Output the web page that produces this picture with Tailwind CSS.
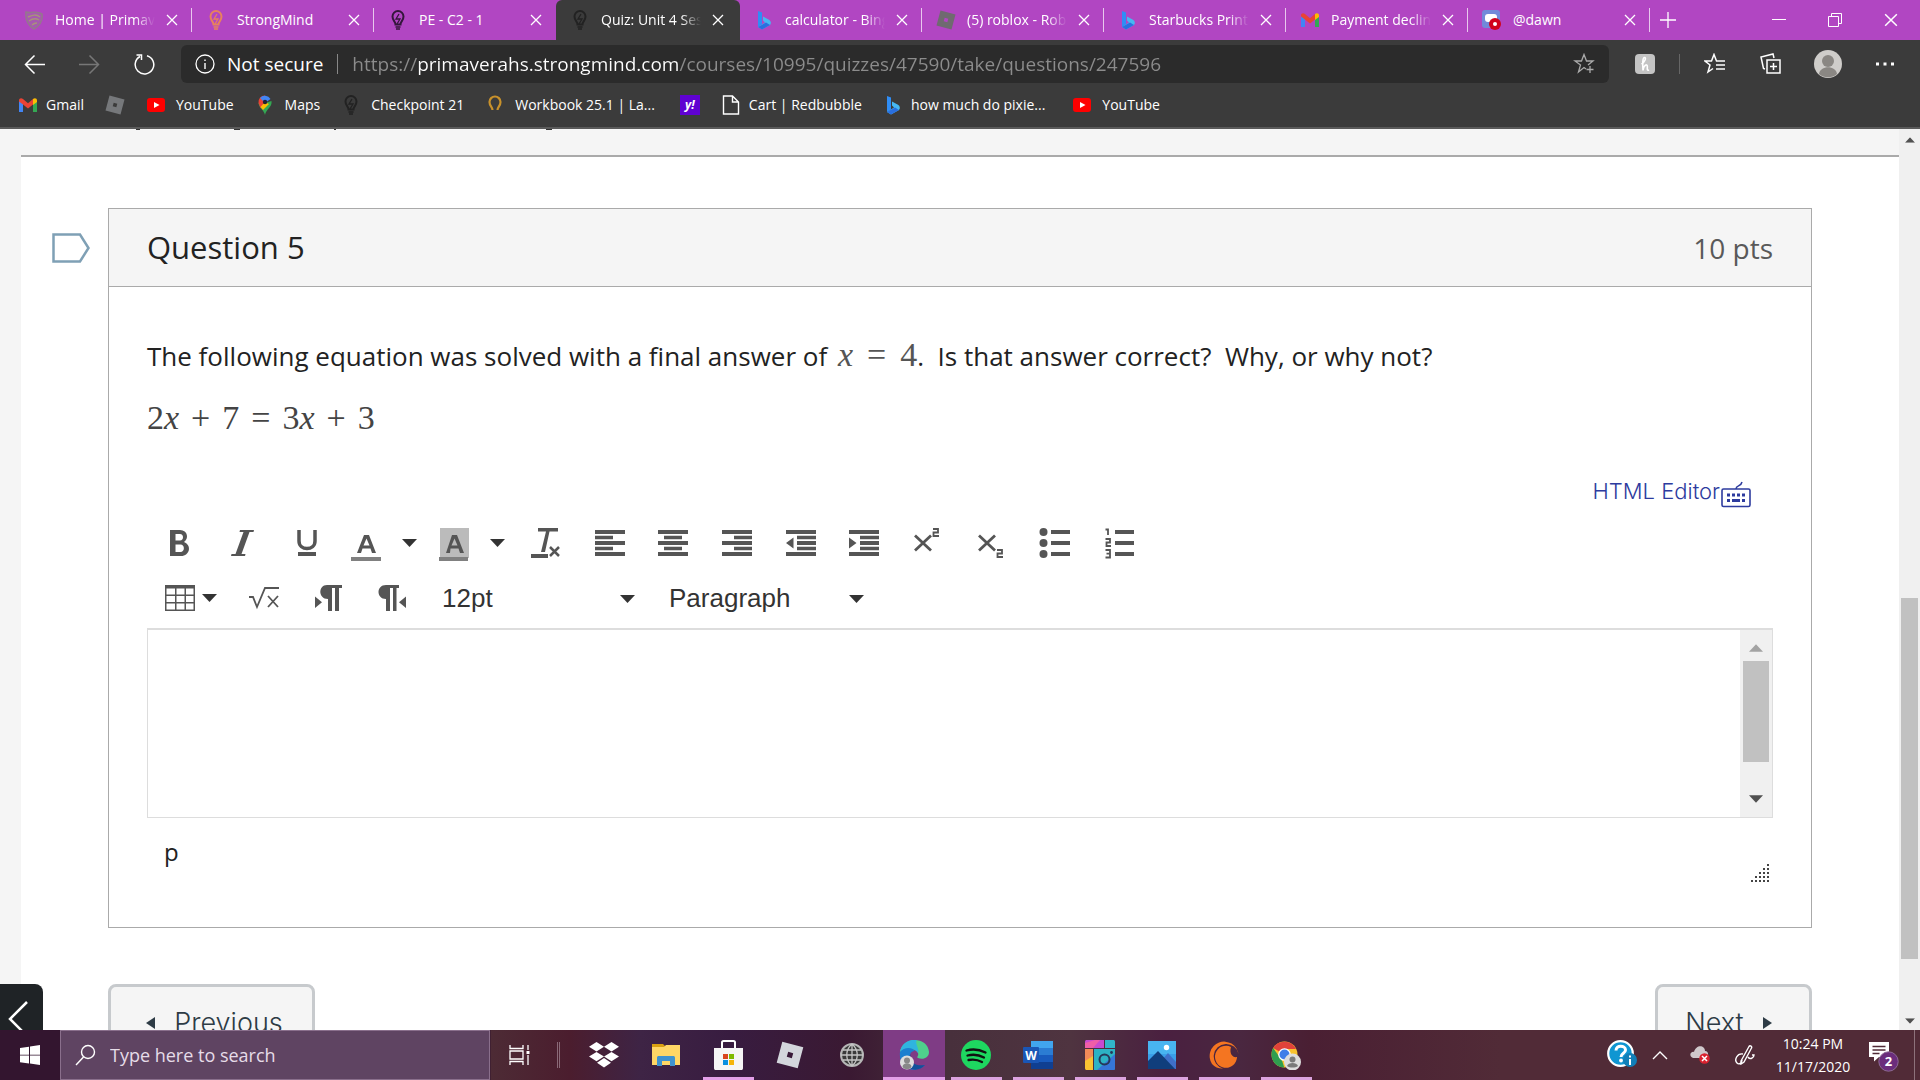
<!DOCTYPE html>
<html lang="en">
  <head>
    <meta charset="UTF-8" />
    <meta name="viewport" content="width=device-width, initial-scale=1.0" />
    <title>Quiz: Unit 4</title>
    <script src="https://cdn.jsdelivr.net/npm/@tailwindcss/browser@4"></script>
    <style>
      body {
        font-family: "Open Sans", "Noto Sans", sans-serif;
      }
    </style>
  </head>
  <body class="flex h-screen flex-col overflow-hidden bg-white text-[#222]">
    <!-- shared icons -->
    <svg class="hidden">
      <symbol id="x" viewBox="0 0 12 12"><path d="M1 1l10 10M11 1L1 11" stroke="currentColor" stroke-width="1.3" fill="none" /></symbol>
      <symbol id="bulb" viewBox="0 0 20 20">
        <path d="M7.5 14.5c0-3-3-4-3-8a5.500 5.500 0 0 1 11 0c0 4-3 5-3 8z" fill="none" stroke="currentColor" stroke-width="2" />
        <path d="M11 4L8 9h4l-3 5" fill="none" stroke="currentColor" stroke-width="1.3" />
        <path d="M7.500 17h5M8 19h4" stroke="currentColor" stroke-width="1.600" />
      </symbol>
      <symbol id="bing" viewBox="0 0 20 20">
        <path d="M4 1l4 1.500v12L4 17z" fill="#2f8df5" />
        <path d="M9 6.500l6 3.200c2 1.300 2.500 3.500 1 5.300L8 19.500 4 17l7-4.500-2-2z" fill="#46b8f2" />
        <path d="M4 17l8-4.500 4 2.500-8 4.500z" fill="#2a6fe0" />
      </symbol>
      <symbol id="roblox" viewBox="0 0 20 20"><path fill-rule="evenodd" d="M4.500 0.500L19.500 4.500 15.500 19.500 0.500 15.500zM8.700 7.700l-1 3.600 3.600 1 1-3.600z" fill="currentColor" /></symbol>
      <symbol id="gmail" viewBox="0 0 20 20">
        <path d="M1 5v12h4V8z" fill="#4285f4" />
        <path d="M15 8v9h4V5z" fill="#34a853" />
        <path d="M1 5.500C1 3 3.500 2.500 5 4l5 4.200L15 4v5.500l-5 4-5-4-4-3z" fill="#ea4335" />
        <path d="M15 4c1.500-1.500 4-1 4 1.500V7l-4 3z" fill="#fbbc04" />
      </symbol>
      <symbol id="youtube" viewBox="0 0 20 20"><rect x="1" y="3" width="18" height="14" rx="3" fill="#f00" /><path d="M8 7l5.500 3L8 13z" fill="#fff" /></symbol>
      <symbol id="caret" viewBox="0 0 15 8"><path d="M0 0h15L7.500 8z" fill="currentColor" /></symbol>
    </svg>

    <!-- tab strip -->
    <header class="flex h-10 shrink-0 items-center bg-[#b146c2] pl-2.5 text-sm text-white">
      <nav class="flex h-full items-center" aria-label="Tabs">
        <div class="flex h-full w-[182px] items-center pl-3.5">
          <svg class="mr-[11px] size-5 shrink-0" viewBox="0 0 20 20"><path d="M2 2c5 2 11-2 16 2 1 7-3 12-8 15C5 16 1 11 2 2z" fill="#a65ab0" stroke="#94788c" stroke-width="1.500" /><path d="M4 7c5-2 8-3 12 0M5 11c4-3 7-3 10-1M8 15c2-2 3-2 5-2" stroke="#a8937a" stroke-width="1.500" fill="none" /></svg>
          <span class="w-[100px] overflow-hidden whitespace-nowrap [mask-image:linear-gradient(to_right,#000_80%,transparent)]">Home | Primavera</span>
          <button class="ml-[11px]" aria-label="Close tab"><svg class="size-3"><use href="#x" /></svg></button>
          <span class="ml-auto h-6 w-px bg-white/70"></span>
        </div>
        <div class="flex h-full w-[182px] items-center pl-3.5">
          <svg class="mr-[11px] size-5 shrink-0 text-[#e8825c]"><use href="#bulb" /></svg>
          <span class="w-[100px] overflow-hidden whitespace-nowrap">StrongMind</span>
          <button class="ml-[11px]" aria-label="Close tab"><svg class="size-3"><use href="#x" /></svg></button>
          <span class="ml-auto h-6 w-px bg-white/70"></span>
        </div>
        <div class="flex h-full w-[182px] items-center pl-3.5">
          <svg class="mr-[11px] size-5 shrink-0 text-[#33163a]"><use href="#bulb" /></svg>
          <span class="w-[100px] overflow-hidden whitespace-nowrap">PE - C2 - 1</span>
          <button class="ml-[11px]" aria-label="Close tab"><svg class="size-3"><use href="#x" /></svg></button>
        </div>
        <div class="flex h-full w-[184px] items-center rounded-t-md bg-[#3b3b3b] pl-3.5">
          <svg class="mr-[11px] size-5 shrink-0 text-[#222]"><use href="#bulb" /></svg>
          <span class="w-[100px] overflow-hidden whitespace-nowrap [mask-image:linear-gradient(to_right,#000_80%,transparent)]">Quiz: Unit 4 Session</span>
          <button class="ml-[11px]" aria-label="Close tab"><svg class="size-3"><use href="#x" /></svg></button>
        </div>
        <div class="flex h-full w-[182px] items-center pl-3.5">
          <svg class="mr-[11px] size-5 shrink-0"><use href="#bing" /></svg>
          <span class="w-[100px] overflow-hidden whitespace-nowrap [mask-image:linear-gradient(to_right,#000_80%,transparent)]">calculator - Bing</span>
          <button class="ml-[11px]" aria-label="Close tab"><svg class="size-3"><use href="#x" /></svg></button>
          <span class="ml-auto h-6 w-px bg-white/70"></span>
        </div>
        <div class="flex h-full w-[182px] items-center pl-3.5">
          <svg class="mr-[11px] size-5 shrink-0 text-[#6f6a70]"><use href="#roblox" /></svg>
          <span class="w-[100px] overflow-hidden whitespace-nowrap [mask-image:linear-gradient(to_right,#000_80%,transparent)]">(5) roblox - Roblox</span>
          <button class="ml-[11px]" aria-label="Close tab"><svg class="size-3"><use href="#x" /></svg></button>
          <span class="ml-auto h-6 w-px bg-white/70"></span>
        </div>
        <div class="flex h-full w-[182px] items-center pl-3.5">
          <svg class="mr-[11px] size-5 shrink-0"><use href="#bing" /></svg>
          <span class="w-[100px] overflow-hidden whitespace-nowrap [mask-image:linear-gradient(to_right,#000_80%,transparent)]">Starbucks Printable</span>
          <button class="ml-[11px]" aria-label="Close tab"><svg class="size-3"><use href="#x" /></svg></button>
          <span class="ml-auto h-6 w-px bg-white/70"></span>
        </div>
        <div class="flex h-full w-[182px] items-center pl-3.5">
          <svg class="mr-[11px] size-5 shrink-0"><use href="#gmail" /></svg>
          <span class="w-[100px] overflow-hidden whitespace-nowrap [mask-image:linear-gradient(to_right,#000_80%,transparent)]">Payment declined</span>
          <button class="ml-[11px]" aria-label="Close tab"><svg class="size-3"><use href="#x" /></svg></button>
          <span class="ml-auto h-6 w-px bg-white/70"></span>
        </div>
        <div class="flex h-full w-[182px] items-center pl-3.5">
          <svg class="mr-[11px] size-5 shrink-0" viewBox="0 0 20 20"><rect width="18" height="18" rx="3" fill="#7289da" /><rect x="3" y="4" width="12" height="8" rx="3" fill="#fff" /><circle cx="13" cy="14" r="6" fill="#d0021b" /><circle cx="13" cy="14" r="2" fill="#fff" /></svg>
          <span class="w-[100px] overflow-hidden whitespace-nowrap">@dawn</span>
          <button class="ml-[11px]" aria-label="Close tab"><svg class="size-3"><use href="#x" /></svg></button>
          <span class="ml-auto h-6 w-px bg-white/70"></span>
        </div>
      </nav>
      <button class="ml-2.5" aria-label="New tab"><svg class="size-4" viewBox="0 0 16 16"><path d="M8 0v16M0 8h16" stroke="#fff" stroke-width="1.300" /></svg></button>
      <div class="ml-auto flex items-center gap-[42px] pr-[22px]">
        <button aria-label="Minimize"><svg class="size-3.5" viewBox="0 0 14 14"><path d="M0 6.500h14" stroke="#fff" /></svg></button>
        <button aria-label="Restore"><svg class="size-3.5" viewBox="0 0 14 14"><path d="M.5 3.500h10v10H.5zM3.500 3.500v-3h10v10h-3" stroke="#fff" fill="none" /></svg></button>
        <button aria-label="Close"><svg class="size-3.5"><use href="#x" /></svg></button>
      </div>
    </header>

    <!-- address row -->
    <div class="flex h-[43px] shrink-0 items-end bg-[#3b3b3b] pl-6 text-white">
      <div class="flex h-[38px] items-center gap-[34px] pr-[26px]">
        <button aria-label="Back"><svg class="size-[21px]" viewBox="0 0 21 21"><path d="M21 10.500H1.500M10.500 1.500l-9 9 9 9" stroke="#fff" stroke-width="1.500" fill="none" /></svg></button>
        <button aria-label="Forward"><svg class="size-[21px]" viewBox="0 0 21 21"><path d="M0 10.500h19.500M10.500 1.500l9 9-9 9" stroke="#777" stroke-width="1.500" fill="none" /></svg></button>
        <button aria-label="Reload"><svg class="size-[21px]" viewBox="0 0 21 21"><path d="M13 1.700A9.300 9.300 0 1 1 6 2.500M2.500 1h5v5" stroke="#fff" stroke-width="1.500" fill="none" /></svg></button>
      </div>
      <div class="flex h-[38px] grow items-center rounded-md bg-[#2b2b2b] px-3.5 text-[19px]">
        <svg class="mr-3 size-5 shrink-0" viewBox="0 0 20 20"><circle cx="10" cy="10" r="9" fill="none" stroke="#fff" stroke-width="1.300" /><path d="M10 9v6M10 5.500v1.500" stroke="#fff" stroke-width="1.400" /></svg>
        <label for="url" class="whitespace-nowrap">Not secure</label>
        <span class="mx-3.5 h-5 w-px bg-[#888]"></span>
        <input id="url" type="text" value="https://primaverahs.strongmind.com/courses/10995/quizzes/47590/take/questions/247596"
          class="min-w-0 grow bg-[linear-gradient(to_right,#8c8c8c_66px,#fff_66px,#fff_326px,#8c8c8c_326px)] bg-clip-text text-transparent outline-none" />
        <button aria-label="Add to favorites"><svg class="size-[22px]" viewBox="0 0 22 22"><path d="M13 16l-2-1.500L5.500 19l2-7L2 8h6.500L11 1.500 13.500 8H20l-5 4M17 13v7M13.500 16.500h7" stroke="#aaa" stroke-width="1.300" fill="none" /></svg></button>
      </div>
      <div class="flex h-[38px] items-center pr-[26px] pl-[26px]">
        <button aria-label="Honey" class="mr-6 flex size-5 items-center justify-center rounded bg-[#c4c4c4]"><svg class="size-4" viewBox="0 0 16 16"><path d="M4.500 8C8 6 9.500 1.500 7.500 1.500S5.500 8 6 14.500c.5-5 4-7 4.300-4.500.2 2-.8 5 1.700 4" stroke="#fff" stroke-width="1.600" fill="none" /></svg></button>
        <span class="mr-6 h-5 w-px bg-[#666]"></span>
        <button aria-label="Favorites" class="mr-[34px]"><svg class="size-[22px]" viewBox="0 0 22 22"><path d="M9 15.500L4 19l2-7L1 8h6.500L10 1.500 12.500 8H21M12 12h9M12 16h9" stroke="#fff" stroke-width="1.500" fill="none" /></svg></button>
        <button aria-label="Collections" class="mr-8"><svg class="size-[22px]" viewBox="0 0 22 22"><path d="M7 7h13v13H7zM13.500 10v7M10 13.500h7M5 16l-1.500-.5L1 4l12-3 1 4" stroke="#fff" stroke-width="1.500" fill="none" /></svg></button>
        <button aria-label="Profile" class="mr-[34px]"><svg class="size-7" viewBox="0 0 28 28"><circle cx="14" cy="14" r="14" fill="#cfcdca" /><circle cx="14" cy="11" r="6" fill="#8a8783" /><path d="M5 24c1-9 17-9 18 0a14 14 0 0 1-18 0z" fill="#8a8783" /></svg></button>
        <button aria-label="Menu"><svg class="h-1 w-[18px]" viewBox="0 0 18 4"><path d="M0 .5h3v3H0zM7.500.5h3v3h-3zM15 .5h3v3h-3z" fill="#fff" /></svg></button>
      </div>
    </div>

    <!-- bookmarks -->
    <nav class="flex h-[46px] shrink-0 items-center gap-[21px] border-b-2 border-[#5a5a5a] bg-[#3b3b3b] pl-[18px] text-sm text-white" aria-label="Bookmarks">
      <a href="#" class="flex items-center gap-2"><svg class="size-5"><use href="#gmail" /></svg>Gmail</a>
      <a href="#" aria-label="Roblox"><svg class="size-5 text-[#76787b]"><use href="#roblox" /></svg></a>
      <a href="#" class="flex items-center gap-2.5"><svg class="size-5"><use href="#youtube" /></svg>YouTube</a>
      <a href="#" class="flex items-center gap-2.5"><svg class="size-5" viewBox="0 0 20 20"><path d="M10 20c-1-5-6-7-6.500-12L10 8l6.500-2c1 6-5.500 8-6.500 14z" fill="#34a853" /><path d="M3.500 8A6.500 6.500 0 0 1 10 .5L10 8l-4.500 5z" fill="#ea4335" /><path d="M5 3A6.500 6.500 0 0 1 15.500 4L10 8z" fill="#4285f4" /><path d="M5.500 12L10 7l4 2-6 6z" fill="#fbbc04" /><circle cx="10" cy="7" r="2.200" fill="#223" /></svg>Maps</a>
      <a href="#" class="flex items-center gap-2.5"><svg class="size-5 text-[#222]"><use href="#bulb" /></svg>Checkpoint 21</a>
      <a href="#" class="flex items-center gap-2.5"><svg class="size-5" viewBox="0 0 20 20"><path d="M7.500 15c0-3-3-4-3-8a5.500 5.500 0 0 1 11 0c0 4-3 5-3 8" fill="none" stroke="#c8912b" stroke-width="2.200" /></svg>Workbook 25.1 | La...</a>
      <a href="#" aria-label="Yahoo" class="ml-1 flex size-5 items-center justify-center bg-[#5f01d1] text-xs font-bold italic">y!</a>
      <a href="#" class="flex items-center gap-2"><svg class="size-5" viewBox="0 0 20 20"><path d="M2.500 1h9l6 6v12h-15zM11.500 1v6h6" fill="none" stroke="#fff" stroke-width="1.400" /></svg>Cart | Redbubble</a>
      <a href="#" class="flex items-center gap-2"><svg class="size-5"><use href="#bing" /></svg>how much do pixie...</a>
      <a href="#" class="ml-1.5 flex items-center gap-2.5"><svg class="size-5"><use href="#youtube" /></svg>YouTube</a>
    </nav>

    <!-- page -->
    <div class="relative flex min-h-0 grow bg-[#f5f5f5] pl-[21px]">
      <main class="min-w-0 grow overflow-hidden">
        <div class="flex h-[26px] gap-[94px] pl-[115px]">
          <span class="h-px w-1 bg-[#333]"></span>
          <span class="h-px w-1.5 bg-[#333]"></span>
          <span class="h-px w-0.5 bg-[#333]"></span>
          <span class="ml-[116px] h-px w-1.5 bg-[#333]"></span>
        </div>
        <div class="flex border-t-2 border-[#aaa] bg-white pt-[51px] pr-[87px] pb-14">
          <button class="mt-[25px] mr-[18px] ml-[31px] self-start" aria-label="Flag question"><svg class="h-[30px] w-[38px]" viewBox="0 0 38 30"><path d="M1.500 1.500H28l8.500 13.500-8.500 13.500H1.500z" fill="#fff" stroke="#7fa0b5" stroke-width="2.500" /></svg></button>
          <div class="min-w-0 grow">
            <section class="border border-[#aaa]">
              <div class="flex h-[78px] items-center justify-between border-b border-[#aaa] bg-[#f5f5f5] px-[38px]">
                <h2 class="text-[31px]">Question 5</h2>
                <span class="text-[28px] text-[#595959]">10 pts</span>
              </div>
              <div class="px-[38px] pt-12">
                <p class="flex items-baseline text-[26px] leading-10 whitespace-pre">The following equation was solved with a final answer of <span class="ml-1 flex items-baseline gap-3.5 font-['Liberation_Serif',serif] text-[34px] leading-10 text-[#555]"><i>x</i><span>=</span>4</span>.&nbsp; Is that answer correct?&nbsp; Why, or why not?</p>
                <p class="mt-[22px] flex items-baseline gap-3 font-['Liberation_Serif',serif] text-[34px] leading-10 text-[#444]"><span>2<i>x</i></span><span>+</span><span>7</span><span>=</span><span>3<i>x</i></span><span>+</span><span>3</span></p>
                <div class="mt-[30px] flex h-[47px] items-center justify-end gap-px pr-[22px] text-[#2d3b9e]">
                  <a href="#" class="font-[Inter,sans-serif] text-[22px] font-light">HTML Editor</a>
                  <button aria-label="Keyboard shortcuts"><svg class="mt-1.5 h-[27px] w-[30px]" viewBox="0 0 30 27"><rect x="1" y="8" width="28" height="17.500" rx="1.500" fill="none" stroke="currentColor" stroke-width="1.600" /><path d="M15 8c0-4 5-2 6-7" fill="none" stroke="currentColor" stroke-width="1.500" /><path d="M6 12.500h3v3H6zm5 0h3v3h-3zm5 0h3v3h-3zm5 0h3v3h-3zM6 18h3v3H6zm5 0h8v3h-8zm10 0h3v3h-3z" fill="currentColor" /></svg></button>
                </div>

                <!-- editor toolbar -->
                <div class="text-[#555]">
                  <div class="flex h-[55px] items-center">
                    <div class="grid w-[191px] grid-cols-3 justify-items-center">
                      <button aria-label="Bold"><svg class="size-8" viewBox="0 0 32 32"><path fill-rule="evenodd" d="M7 3h10c8 0 9 9 4 12 8 3 6 14-3 14H7zM12.500 7v6.500H17c4 0 4-6.500 0-6.500zm0 10.500V25H17.500c4.500 0 4.500-7.500 0-7.500z" fill="currentColor" /></svg></button>
                      <button aria-label="Italic"><svg class="size-8" viewBox="0 0 32 32"><path d="M14 3h14l-.5 2h-4l-8 22h4l-.5 2H5l.5-2h4l8-22h-4z" fill="currentColor" /></svg></button>
                      <button aria-label="Underline"><svg class="size-8" viewBox="0 0 32 32"><path d="M9 3v11c0 10 16 10 16 0V3" fill="none" stroke="currentColor" stroke-width="3.500" /><path d="M8 25h18v4H8z" fill="currentColor" /></svg></button>
                    </div>
                    <div class="flex w-[88px] items-center pl-[13px]">
                      <button aria-label="Text color"><svg class="mt-1 h-[34px] w-[30px]" viewBox="0 0 30 34"><path fill-rule="evenodd" d="M13 7h5l7 18h-4l-1.500-4.500h-8L10 25H6zm2.500 3.500L12.500 17.500h6z" fill="currentColor" /><path d="M0 29h30v4H0z" fill="#808080" /></svg></button>
                      <button aria-label="Text color options" class="ml-[21px] text-[#333]"><svg class="h-2 w-[15px]"><use href="#caret" /></svg></button>
                    </div>
                    <div class="flex w-[88px] items-center pl-[13px]">
                      <button aria-label="Background color"><svg class="mt-1 h-[34px] w-[30px]" viewBox="0 0 30 34"><path d="M1 0h29v30H1z" fill="#bbb" /><path fill-rule="evenodd" d="M13 7h5l7 18h-4l-1.500-4.500h-8L11 25H7zm2.500 3.500L12.500 17.500h6z" fill="currentColor" /><path d="M0 29h29v4H0z" fill="#808080" /></svg></button>
                      <button aria-label="Background color options" class="ml-[21px] text-[#333]"><svg class="h-2 w-[15px]"><use href="#caret" /></svg></button>
                    </div>
                    <div class="grid w-[637px] grid-cols-10 justify-items-center">
                      <button aria-label="Clear formatting"><svg class="size-8" viewBox="0 0 32 32"><path d="M8 1h20v3.500H19.500L15 25h-4l5-20.500H8zM1 27h17v4H1z" fill="currentColor" /><path d="M20 20l9 9M29 20l-9 9" stroke="currentColor" stroke-width="2.500" /></svg></button>
                      <button aria-label="Align left"><svg class="size-8" viewBox="0 0 32 32"><path d="M1 3h30v4H1zm0 5.700h18v3.500H1zM1 14h30v4H1zm0 5.700h18v3.500H1zM1 25h30v4H1z" fill="currentColor" /></svg></button>
                      <button aria-label="Align center"><svg class="size-8" viewBox="0 0 32 32"><path d="M1 3h30v4H1zm6 5.700h18v3.500H7zM1 14h30v4H1zm6 5.700h18v3.500H7zM1 25h30v4H1z" fill="currentColor" /></svg></button>
                      <button aria-label="Align right"><svg class="size-8" viewBox="0 0 32 32"><path d="M1 3h30v4H1zm12 5.700h18v3.500H13zM1 14h30v4H1zm12 5.700h18v3.500H13zM1 25h30v4H1z" fill="currentColor" /></svg></button>
                      <button aria-label="Decrease indent"><svg class="size-8" viewBox="0 0 32 32"><path d="M1 3h30v4H1zm11 5.700h19v3.500H12zM12 14h19v4H12zm0 5.700h19v3.500H12zM1 25h30v4H1zM8.500 10.500v11L1 16z" fill="currentColor" /></svg></button>
                      <button aria-label="Increase indent"><svg class="size-8" viewBox="0 0 32 32"><path d="M1 3h30v4H1zm11 5.700h19v3.500H12zM12 14h19v4H12zm0 5.700h19v3.500H12zM1 25h30v4H1zM1 10.500v11L8.500 16z" fill="currentColor" /></svg></button>
                      <button aria-label="Superscript"><svg class="size-8" viewBox="0 0 32 32"><path d="M3 8.500l16 15M19 8.500L3 23.500" stroke="currentColor" stroke-width="2.800" /><path d="M21 2h5v3.500h-4.500V9H27" fill="none" stroke="currentColor" stroke-width="1.800" /></svg></button>
                      <button aria-label="Subscript"><svg class="size-8" viewBox="0 0 32 32"><path d="M3 8.500l16 15M19 8.500L3 23.500" stroke="currentColor" stroke-width="2.800" /><path d="M21 23h5v3.500h-4.500V30H27" fill="none" stroke="currentColor" stroke-width="1.800" /></svg></button>
                      <button aria-label="Bulleted list"><svg class="size-8" viewBox="0 0 32 32"><path d="M12 3h19v4H12zm0 11h19v4H12zm0 11h19v4H12z" fill="currentColor" /><circle cx="4.500" cy="5" r="4" fill="currentColor" /><circle cx="4.500" cy="16" r="4" fill="currentColor" /><circle cx="4.500" cy="27" r="4" fill="currentColor" /></svg></button>
                      <button aria-label="Numbered list"><svg class="size-8" viewBox="0 0 32 32"><path d="M12 3h19v4H12zm0 11h19v4H12zm0 11h19v4H12z" fill="currentColor" /><path d="M2.500 2.500H5V8M2.500 12H7v3.500H3.500V19H8M2.500 23H7v7.500H2.500M3.500 26.700H7" fill="none" stroke="currentColor" stroke-width="1.800" /></svg></button>
                    </div>
                  </div>
                  <div class="flex h-[58px] items-start pt-[9px] text-[#333]">
                    <button class="flex w-[85px] items-center gap-[7px] pt-1.5 pl-[18px]" aria-label="Table"><svg class="h-[26px] w-[30px] text-[#555]" viewBox="0 0 30 26"><path fill-rule="evenodd" d="M0 0h30v26H0zM1.500 3.500v6H10v-6zm10 0v6h8v-6zm9.500 0v6h7.500v-6zM1.500 11v6H10v-6zm10 0v6h8v-6zm9.500 0v6h7.500v-6zM1.500 18.500v6H10v-6zm10 0v6h8v-6zm9.500 0v6h7.500v-6z" fill="currentColor" /></svg><svg class="h-2 w-[15px]"><use href="#caret" /></svg></button>
                    <div class="grid w-48 grid-cols-3 justify-items-center pt-1.5 text-[#555]">
                      <button aria-label="Insert equation"><svg class="h-[26px] w-8" viewBox="0 0 32 26"><path d="M1 12h4l4 10 8-19h14" fill="none" stroke="currentColor" stroke-width="1.800" /><path d="M20 11l10 11M30 11L20 22" stroke="currentColor" stroke-width="1.800" /></svg></button>
                      <button aria-label="Left to right"><svg class="h-[26px] w-7" viewBox="0 0 28 26"><path d="M13 0h15v3h-3v23h-4V3h-3v23h-4V14C4 14 4 0 13 0zM1 11.500V23l7-5.700z" fill="currentColor" /></svg></button>
                      <button aria-label="Right to left"><svg class="h-[26px] w-7" viewBox="0 0 28 26"><path d="M8 0h13v3h-2.500v23H15V3h-3v23H8V14C-2 14-2 0 8 0zM28 11.500V23l-7-5.700z" fill="currentColor" /></svg></button>
                    </div>
                    <label class="relative w-[227px]">
                      <select aria-label="Font size" class="h-9 w-full appearance-none pl-[18px] font-['Liberation_Sans',sans-serif] text-[26px]"><option>12pt</option></select>
                      <svg class="pointer-events-none absolute top-4 right-4 h-2 w-[15px]"><use href="#caret" /></svg>
                    </label>
                    <label class="relative w-[229px]">
                      <select aria-label="Block format" class="h-9 w-full appearance-none pl-[18px] font-['Liberation_Sans',sans-serif] text-[26px]"><option>Paragraph</option></select>
                      <svg class="pointer-events-none absolute top-4 right-4 h-2 w-[15px]"><use href="#caret" /></svg>
                    </label>
                  </div>
                </div>

                <div class="flex h-[190px] border border-[#ddd] border-t-2">
                  <textarea aria-label="Answer" class="grow resize-none p-3 text-[26px] outline-none"></textarea>
                  <div class="flex w-8 flex-col items-center bg-[#f0f0f0] py-3.5 pr-px">
                    <svg class="h-2 w-3.5 rotate-180 text-[#a3a3a3]"><use href="#caret" /></svg>
                    <span class="mt-[9px] h-[101px] w-[26px] bg-[#c1c1c1]"></span>
                    <svg class="mt-auto h-2 w-3.5 text-[#505050]"><use href="#caret" /></svg>
                  </div>
                </div>
                <div class="flex h-[109px] items-start justify-between pt-4 pr-1 pl-[17px]">
                  <span class="text-2xl leading-9">p</span>
                  <svg class="mt-[30px] size-[18px]" viewBox="0 0 18 18"><path d="M16 0h2v2h-2zM12 4h2v2h-2zm4 0h2v2h-2zM8 8h2v2H8zm4 0h2v2h-2zm4 0h2v2h-2zM4 12h2v2H4zm4 0h2v2H8zm4 0h2v2h-2zm4 0h2v2h-2zM0 16h2v2H0zm4 0h2v2H4zm4 0h2v2H8zm4 0h2v2h-2zm4 0h2v2h-2z" fill="#444" /></svg>
                </div>
              </div>
            </section>

            <div class="mt-14 flex justify-between font-[Inter,sans-serif] text-[27px] font-light text-[#2d3b45]">
              <button class="flex h-[78px] w-[207px] items-center justify-center gap-[18px] rounded-lg border-3 border-[#c7cacd] bg-[#f5f5f5] pl-1"><svg class="size-3" viewBox="0 0 12 12"><path d="M11 0v12L2 6z" fill="currentColor" /></svg>Previous</button>
              <button class="flex h-[78px] w-[157px] items-center justify-center gap-[18px] rounded-lg border-3 border-[#c7cacd] bg-[#f5f5f5] pr-2">Next<svg class="size-3" viewBox="0 0 12 12"><path d="M1 0v12l9-6z" fill="currentColor" /></svg></button>
            </div>
          </div>
        </div>
      </main>
      <!-- window scrollbar -->
      <div class="flex w-[21px] shrink-0 flex-col items-center bg-[#f0f0f0] pt-2 pb-1.5">
        <svg class="h-1.5 w-2.5 rotate-180 text-[#505050]" viewBox="0 0 15 8"><use href="#caret" /></svg>
        <span class="grow-[454]"></span>
        <span class="w-[17px] grow-[361] bg-[#c1c1c1]"></span>
        <span class="grow-[59]"></span>
        <svg class="h-1.5 w-2.5 text-[#505050]" viewBox="0 0 15 8"><use href="#caret" /></svg>
      </div>
      <button class="absolute bottom-0 left-0 h-[46px] w-[43px] overflow-hidden rounded-tr-lg bg-[#1f2326]" aria-label="Expand menu"><svg class="h-[46px] w-[43px]" viewBox="0 0 43 46"><path d="M27 18L10 35l17 17" fill="none" stroke="#fff" stroke-width="2.500" /></svg></button>
    </div>

    <!-- taskbar -->
    <footer class="flex h-[50px] shrink-0 bg-[linear-gradient(to_right,#33152f_0,#33152f_490px,#4d2b35_491px,#4b1d2e_570px,#3e2445_640px,#381c40_730px,#3a1932_850px,#48303c_950px,#4f3440_1070px,#4a2040_1165px,#4a2740_1240px,#4a1f33_1310px,#512b37_1500px)] text-white">
      <button class="flex w-[60px] items-center justify-center" aria-label="Start"><svg class="size-5" viewBox="0 0 20 20"><path d="M0 3l9-1.300v8H0zm10-1.500L20 0v9.700H10zM0 10.500h9v8L0 17.200zm10 0h10V20l-10-1.400z" fill="#fff" /></svg></button>
      <div class="flex w-[430px] items-center border border-[#8a6f8c] bg-[#5f4462] pl-3.5">
        <svg class="mr-3.5 h-[22px] w-[21px]" viewBox="0 0 21 22"><circle cx="13" cy="8" r="6.500" fill="none" stroke="#fff" stroke-width="1.400" /><path d="M8.500 13L1 21" stroke="#fff" stroke-width="1.400" /></svg>
        <input type="text" aria-label="Search" placeholder="Type here to search" class="grow bg-transparent text-lg outline-none placeholder:text-[#e6dce8]" />
      </div>
      <button class="flex w-[60px] items-center justify-center" aria-label="Task view"><svg class="h-5 w-[22px]" viewBox="0 0 22 20"><path d="M1 0v3.500h13V0M1 20v-3.500h13V20M1 6h13v8H1zM19 0v5M19 10v10" fill="none" stroke="#fff" stroke-width="1.300" /><path d="M17.500 6h3v3h-3z" fill="#fff" /></svg></button>
      <span class="mt-3 mr-[13px] ml-[7px] h-[26px] w-[3px] border-x border-[#8a6a78]"></span>
      <div class="flex">
        <button class="flex w-[62px] items-center justify-center" aria-label="Dropbox"><svg class="h-[26px] w-[30px]" viewBox="0 0 30 26"><path d="M7.500 0L15 4.700 7.500 9.500 0 4.700zm15 0L30 4.700l-7.500 4.800L15 4.700zM7.500 10l7.500 4.500-7.500 4.800L0 14.500zm15 0l7.500 4.500-7.500 4.800-7.500-4.800zM15 16l7 4.700-7 4.800-7-4.800z" fill="#fff" /></svg></button>
        <button class="flex w-[62px] items-center justify-center" aria-label="File Explorer"><svg class="h-6 w-7" viewBox="0 0 28 24"><path d="M0 1h11l3 3H0z" fill="#d9a011" /><path d="M0 4h12l2-2h14v20H0z" fill="#ffd766" /><path d="M5 23v-8c0-1.500.5-2 2-2h14c1.500 0 2 .5 2 2v8h-5v-5h-8v5z" fill="#3f93cf" /></svg></button>
        <button class="relative flex w-[62px] items-center justify-center" aria-label="Store"><svg class="h-[30px] w-[29px]" viewBox="0 0 29 30"><path d="M8 8V2.500C8 1.500 8.500 1 9.500 1h10c1 0 1.500.5 1.500 1.500V8" fill="none" stroke="#fff" stroke-width="2" /><path d="M0 8h29v20c0 1.500-.5 2-2 2H2c-1.500 0-2-.5-2-2z" fill="#f5f5f5" /><path d="M9 14h5v5H9z" fill="#d9451e" /><path d="M15 14h5v5h-5z" fill="#7fba00" /><path d="M9 20h5v5H9z" fill="#0a8fe0" /><path d="M15 20h5v5h-5z" fill="#f5b50a" /></svg><span class="absolute bottom-0 h-[3px] w-[51px] bg-[#e39fe8]"></span></button>
        <button class="flex w-[62px] items-center justify-center" aria-label="Roblox"><svg class="size-7 text-[#d3d6dc]"><use href="#roblox" /></svg></button>
        <button class="flex w-[62px] items-center justify-center" aria-label="Browser"><svg class="size-6" viewBox="0 0 24 24"><circle cx="12" cy="12" r="11" fill="#3a3a3a" stroke="#b5b5b5" stroke-width="2" /><path d="M12 1v22M1 12h22M3 7h18M3 17h18M12 1c-7 6-7 16 0 22M12 1c7 6 7 16 0 22" fill="none" stroke="#c4c4c4" stroke-width="1.300" /></svg></button>
        <button class="relative flex w-[62px] items-center justify-center bg-[#7f3c85]" aria-label="Edge"><svg class="size-[30px]" viewBox="0 0 30 30"><path d="M1 12C3-4 29-4 30 12c0 6-6 8-11 6-2-1 1-2 0-5C17 8 6 7 1 12z" fill="#4fd08c" /><path d="M1 12C3 2 11-1 18 0c-3 3 3 9 1 13C17 8 6 7 1 12z" fill="#2fb4e0" /><path d="M1 12c4-5 12-5 15-1-7 0-6 9-2 13 3 3 8 3 12 1-9 9-27 5-25-13z" fill="#1b7fd0" /><path d="M12 14c-3 6 3 13 14 11-5 6-14 6-17 1-2-5 0-9 3-12z" fill="#11519c" /><circle cx="8" cy="22.500" r="7" fill="#ddd" /><circle cx="8" cy="20.500" r="3" fill="#888" /><path d="M3.500 27c0-5 9-5 9 0-2 3-7 3-9 0z" fill="#888" /></svg><span class="absolute bottom-0 h-[3px] w-[62px] bg-[#e39fe8]"></span></button>
        <button class="relative flex w-[62px] items-center justify-center" aria-label="Spotify"><svg class="size-[30px]" viewBox="0 0 30 30"><circle cx="15" cy="15" r="15" fill="#1ed760" /><path d="M5.500 10.500c7-2 13-1 19 2M6.500 15.500c6-1.500 11-1 16.500 2M7.500 20c5-1 9-.5 13.500 2" fill="none" stroke="#111" stroke-width="2.300" stroke-linecap="round" /></svg><span class="absolute bottom-0 h-[3px] w-[51px] bg-[#dca3df]"></span></button>
        <button class="relative flex w-[62px] items-center justify-center" aria-label="Word"><svg class="h-7 w-[30px]" viewBox="0 0 30 28"><path d="M8 0h22v7H8z" fill="#41a5ee" /><path d="M8 7h22v7H8z" fill="#2b7cd3" /><path d="M8 14h22v7H8z" fill="#185abd" /><path d="M8 21h22v7H8z" fill="#103f91" /><rect y="6" width="16" height="16" rx="1" fill="#1a56b5" /><text x="8" y="18.500" text-anchor="middle" font-size="12" font-weight="700" fill="#fff">W</text></svg><span class="absolute bottom-0 h-[3px] w-[51px] bg-[#dca3df]"></span></button>
        <button class="relative flex w-[62px] items-center justify-center" aria-label="Photo collage"><svg class="size-[30px]" viewBox="0 0 30 30"><path d="M0 8V2c0-1.500.5-2 2-2h17v8z" fill="#c74bd0" /><path d="M0 3L10 0h5L8 8H0z" fill="#f05ea8" /><path d="M20 0h8c1.500 0 2 .5 2 2v6H20z" fill="#31b6c9" /><path d="M0 9h8v21H2c-1.500 0-2-.5-2-2z" fill="#f9c332" /><path d="M0 9h8v7l-8 5z" fill="#f28a58" /><path d="M9 9h21v19c0 1.500-.5 2-2 2H9z" fill="#2db2c4" /><path d="M30 14v14c0 1.500-.5 2-2 2H12z" fill="#3676d8" /><circle cx="19.500" cy="19.500" r="5" fill="none" stroke="#263859" stroke-width="2" /><circle cx="26.500" cy="12.500" r="1.400" fill="#263859" /></svg><span class="absolute bottom-0 h-[3px] w-[51px] bg-[#dca3df]"></span></button>
        <button class="relative flex w-[62px] items-center justify-center" aria-label="Photos"><svg class="size-7" viewBox="0 0 28 28"><path d="M0 0h28v28H0z" fill="#3a9fe8" /><path d="M0 0h28v13H0z" fill="#48b4f0" /><path d="M14 19l6-7 8 9v7H14z" fill="#3f6fc9" /><path d="M0 20L10 10l17 18H0z" fill="#103e7c" /><circle cx="18.500" cy="6.500" r="2.700" fill="#fff" /></svg><span class="absolute bottom-0 h-[3px] w-[51px] bg-[#dca3df]"></span></button>
        <button class="relative flex w-[62px] items-center justify-center" aria-label="Crunchyroll"><svg class="size-[30px]" viewBox="0 0 30 30"><path d="M3 24A14.500 14.500 0 1 1 29.500 14 12.500 12.500 0 1 0 14 28.500 14 14 0 0 1 3 24z" fill="#f47521" /><path d="M22 7a11 11 0 1 0 6 10c-4 1-8-3-6-10z" fill="#f47521" /></svg><span class="absolute bottom-0 h-[3px] w-[51px] bg-[#dca3df]"></span></button>
        <button class="relative flex w-[62px] items-center justify-center" aria-label="Chrome"><svg class="size-[30px]" viewBox="0 0 30 30"><circle cx="13.500" cy="14.500" r="13" fill="#f9c22e" /><path d="M13.500 14.500L2.200 8A13 13 0 0 1 25 9H14z" fill="#e0423a" /><path d="M2.200 8l9 13 2 6.500A13 13 0 0 1 2.200 8z" fill="#2f9e4f" /><circle cx="13.500" cy="14.500" r="6.300" fill="#fff" /><circle cx="13.500" cy="14.500" r="5" fill="#3f7ee8" /><circle cx="21.500" cy="22" r="8.500" fill="#ddd" /><circle cx="21.500" cy="19.500" r="3" fill="#7a7a7a" /><path d="M16 26c1-4 10-4 11 0-3 2-8 2-11 0z" fill="#7a7a7a" /></svg><span class="absolute bottom-0 h-[3px] w-[51px] bg-[#dca3df]"></span></button>
      </div>
      <div class="ml-auto flex items-center">
        <button aria-label="Help"><svg class="size-[30px]" viewBox="0 0 30 30"><circle cx="13.500" cy="13.500" r="12.300" fill="#1096d2" stroke="#fff" stroke-width="2.200" /><path d="M9 10.500c0-6 9.500-5.500 9.500-.5 0 3.500-4.500 3-4.500 7" fill="none" stroke="#fff" stroke-width="3" /><circle cx="14" cy="20.500" r="1.900" fill="#fff" /><circle cx="23" cy="20" r="7" fill="#117fb8" /><path d="M23 19v6M23 15.500v2" stroke="#fff" stroke-width="2" /></svg></button>
        <button class="ml-[15px]" aria-label="Show hidden icons"><svg class="h-2.5 w-4" viewBox="0 0 16 10"><path d="M1 9l7-7 7 7" fill="none" stroke="#fff" stroke-width="1.400" /></svg></button>
        <button class="ml-[22px]" aria-label="OneDrive"><svg class="h-[18px] w-5" viewBox="0 0 20 18"><path d="M3 12c-5-2-2-7 1-6C6-2 15-1 15 5c4 0 4 6 1 7z" fill="#cfc8cb" /><circle cx="14.500" cy="12.500" r="5.300" fill="#d9222f" /><path d="M12 10l5 5M17 10l-5 5" stroke="#fff" stroke-width="1.500" /></svg></button>
        <button class="ml-[25px]" aria-label="Windows Ink"><svg class="size-5" viewBox="0 0 20 20"><path d="M6 16L14 1.500c1-1.500 3.500 0 2.500 1.500L9 17l-3 2zM8 9C2 8-1 15 2 18c2 2 5 0 5-3M13 12c2 3 6 1 6-2h-2" fill="none" stroke="#fff" stroke-width="1.400" /></svg></button>
        <div class="ml-[18px] w-20 text-center text-sm leading-[23px]"><p>10:24 PM</p><p>11/17/2020</p></div>
        <button class="ml-4" aria-label="Notifications"><svg class="mt-1 size-[30px]" viewBox="0 0 30 30"><path d="M0 0h20v15H10l-5 4.500V15H0z" fill="#fff" /><path d="M3.500 4.500h13M3.500 8h13M3.500 11.500h7" stroke="#512b37" stroke-width="1.300" /><circle cx="19.500" cy="19.500" r="9.700" fill="#6b2d7c" stroke="#8d6a95" /><text x="19.500" y="24" text-anchor="middle" font-size="13" font-weight="700" fill="#fff">2</text></svg></button>
        <span class="mr-[5px] ml-[15px] h-[50px] w-px bg-[#8d727b]"></span>
      </div>
    </footer>
  </body>
</html>
